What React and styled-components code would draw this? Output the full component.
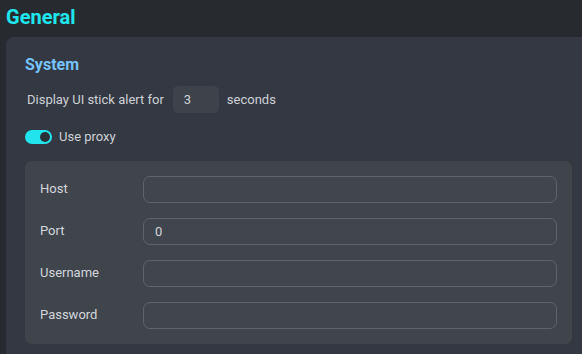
import React from 'react';
import styled, { createGlobalStyle } from 'styled-components';

const GlobalStyle = createGlobalStyle`
  html, body {
    margin: 0;
    padding: 0;
    background: #272b30;
    font-family: Roboto, "Liberation Sans", sans-serif;
  }
`;

const Page = styled.div`
  width: 582px;
  height: 354px;
  overflow: hidden;
  background: #272b30;
  padding-top: 5px;
  box-sizing: border-box;
`;

const Title = styled.h1`
  margin: 0 0 8px 6px;
  font-size: 20px;
  line-height: 24px;
  font-weight: 700;
  color: #1fe6ee;
`;

const Card = styled.section`
  margin: 0 -12px 0 6px;
  padding: 18px 22px 20px 19px;
  background: #343842;
  border-radius: 8px;
  min-height: 340px;
`;

const SectionTitle = styled.h2`
  margin: 0 0 12px;
  font-size: 16px;
  line-height: 19px;
  font-weight: 700;
  color: #74c3fb;
`;

const InlineRow = styled.div`
  display: flex;
  align-items: center;
  gap: 8px;
  padding-left: 2px;
  font-size: 13px;
  color: #cdd1d7;
`;

const SmallInput = styled.div`
  width: 46px;
  height: 27px;
  box-sizing: border-box;
  padding: 0 11px;
  display: flex;
  align-items: center;
  background: #3e424a;
  border-radius: 5px;
  color: #cdd1d7;
  margin-left: 1px;
`;

const ToggleRow = styled.label`
  display: flex;
  align-items: center;
  gap: 7px;
  margin-top: 16px;
  font-size: 13px;
  color: #cdd1d7;
`;

const Switch = styled.span`
  width: 27px;
  height: 14px;
  border-radius: 7px;
  background: ${({ on }) => (on ? '#22e4ec' : '#555a63')};
  display: flex;
  align-items: center;
  justify-content: ${({ on }) => (on ? 'flex-end' : 'flex-start')};
  padding: 0 2px;
  box-sizing: border-box;

  &::after {
    content: '';
    width: 10px;
    height: 10px;
    border-radius: 50%;
    background: #2a2e35;
  }
`;

const Panel = styled.div`
  margin-top: 17px;
  padding: 15px 15px 15px;
  background: #40444b;
  border-radius: 7px;
  display: flex;
  flex-direction: column;
  gap: 15px;
`;

const Field = styled.div`
  display: grid;
  grid-template-columns: 103px 1fr;
  align-items: center;
`;

const FieldLabel = styled.span`
  font-size: 13px;
  color: #d3d6dc;
  padding-bottom: 2px;
`;

const TextBox = styled.div`
  height: 27px;
  box-sizing: border-box;
  border: 1px solid #5e636d;
  border-radius: 7px;
  background: #41454d;
  padding: 0 11px;
  display: flex;
  align-items: center;
  font-size: 13px;
  color: #d3d6dc;
`;

const fields = [
  { label: 'Host', value: '' },
  { label: 'Port', value: '0' },
  { label: 'Username', value: '' },
  { label: 'Password', value: '' },
];

export default function App() {
  return (
    <Page>
      <GlobalStyle />
      <Title>General</Title>
      <Card>
        <SectionTitle>System</SectionTitle>
        <InlineRow>
          Display UI stick alert for
          <SmallInput>3</SmallInput>
          seconds
        </InlineRow>
        <ToggleRow>
          <Switch on />
          Use proxy
        </ToggleRow>
        <Panel>
          {fields.map((f) => (
            <Field key={f.label}>
              <FieldLabel>{f.label}</FieldLabel>
              <TextBox>{f.value}</TextBox>
            </Field>
          ))}
        </Panel>
      </Card>
    </Page>
  );
}
